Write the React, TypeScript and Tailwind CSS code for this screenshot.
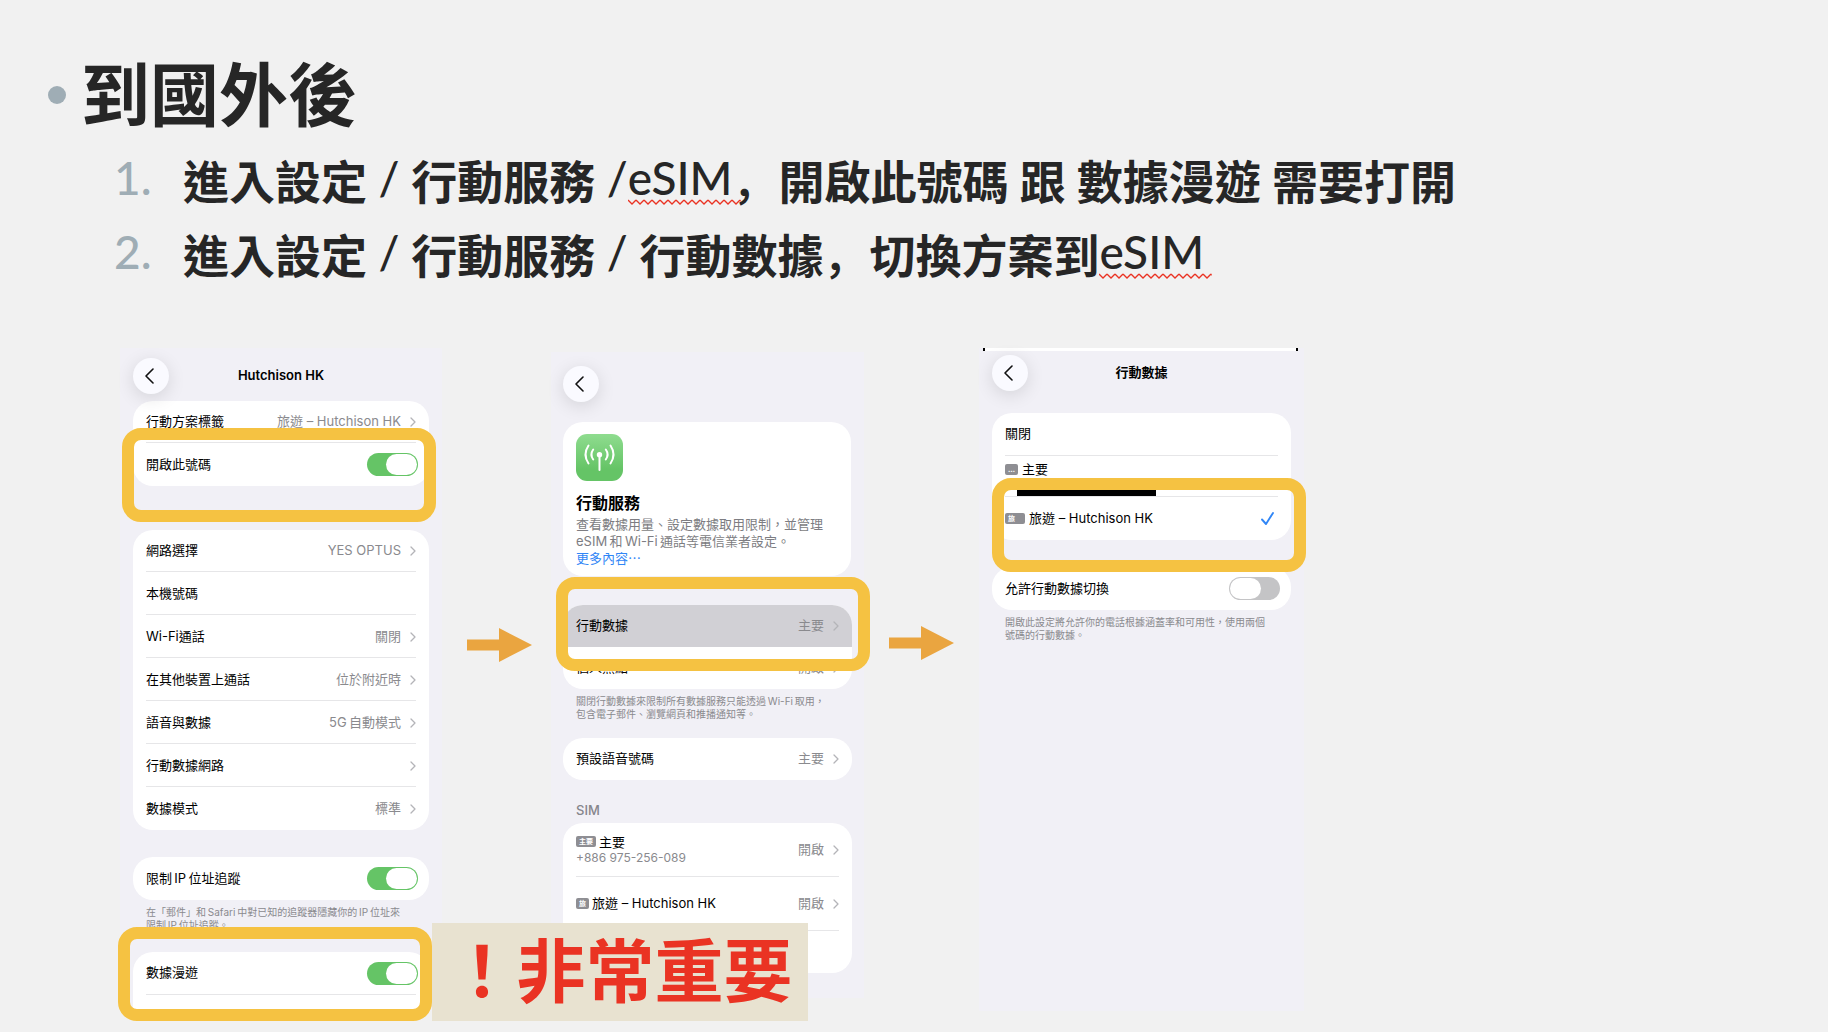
import { useId } from "react";
import type { ReactNode } from "react";

const slideFont = "font-['Lato','Noto_Sans_CJK_TC',sans-serif]";
const phoneFont = "font-['Inter','Noto_Sans_CJK_TC',sans-serif]";

function BackButton() {
  return (
    <button
      type="button"
      aria-label="返回"
      className="flex h-9 w-9 shrink-0 items-center justify-center rounded-full bg-[#fafaff] shadow-[0_4px_18px_rgba(0,0,0,0.12)]"
    >
      <svg viewBox="0 0 9 16" className="mr-1 h-4 w-[9px]" fill="none" stroke="#111" strokeWidth="1.6" strokeLinecap="round" strokeLinejoin="round">
        <path d="M8 1 1 8l7 7" />
      </svg>
    </button>
  );
}

function Chevron() {
  return (
    <svg viewBox="0 0 6 10" className="h-[10px] w-[6px] shrink-0" fill="none" stroke="#b4b4b8" strokeWidth="1.3" strokeLinecap="round" strokeLinejoin="round">
      <path d="m1 1 4 4-4 4" />
    </svg>
  );
}

function Card({ children }: { children: ReactNode }) {
  return <div className="overflow-hidden rounded-[20px] bg-white">{children}</div>;
}

interface LinkRowProps {
  label: string;
  value?: string;
  divider?: boolean;
  active?: boolean;
}

function LinkRow({ label, value, divider, active }: LinkRowProps) {
  return (
    <button type="button" className={`block w-full px-[13px] text-left ${active ? "bg-[#d1d0d5]" : ""}`}>
      <span className={`flex h-[42px] items-center justify-between ${divider ? "border-b border-[#e6e6e8]" : ""}`}>
        <span>{label}</span>
        <span className="flex items-center gap-[9px] text-[#8a8a8e]">
          {value}
          <Chevron />
        </span>
      </span>
    </button>
  );
}

function ToggleRow({ label, on, divider }: { label: string; on?: boolean; divider?: boolean }) {
  const id = useId();
  return (
    <div className="px-[13px]">
      <div className={`flex h-[43px] items-center justify-between ${divider ? "border-b border-[#e6e6e8]" : ""}`}>
        <label htmlFor={id}>{label}</label>
        <input
          id={id}
          type="checkbox"
          defaultChecked={on}
          className="-mr-0.5 flex h-[23px] w-[51px] appearance-none rounded-full bg-[#c4c4c6] p-px before:h-[21px] before:w-[31px] before:rounded-full before:bg-white checked:justify-end checked:bg-[#65c466]"
        />
      </div>
    </div>
  );
}

function Footnote({ children }: { children: ReactNode }) {
  return <p className="mt-1.5 px-[13px] text-[10px] leading-[13px] whitespace-nowrap text-[#8a8a8e]">{children}</p>;
}

function Badge({ children, wide }: { children: ReactNode; wide?: boolean }) {
  return (
    <span
      className={`flex h-[11px] shrink-0 items-center justify-center rounded-[2px] bg-[#8e8e93] text-[7px] leading-none font-bold text-white ${
        wide ? "w-5" : "w-[13px]"
      }`}
    >
      {children}
    </span>
  );
}

// Yellow highlight laid over a phone
function Ring({ className }: { className: string }) {
  return (
    <div
      aria-hidden="true"
      className={`pointer-events-none absolute z-10 h-[94px] w-[314px] rounded-[19px] border-[12px] border-[#f5c242] ${className}`}
    />
  );
}

function Arrow() {
  return (
    <svg viewBox="0 0 65 34" className="h-[34px] w-[65px] shrink-0" aria-hidden="true">
      <path d="M0 11.5h32V0l33 17-33 17V22.500H0z" fill="#eaa540" />
    </svg>
  );
}

// Latin runs sit a little above the baseline of the Chinese text
function Latin({ children }: { children: ReactNode }) {
  return <span className="align-[4px] leading-none font-medium">{children}</span>;
}

function Slash() {
  return <Latin> / </Latin>;
}

function Comma() {
  return (
    <span lang="zh-Hans" className="font-['Noto_Sans_CJK_SC',sans-serif] leading-none font-medium">
      ，
    </span>
  );
}

function Misspelled({ children }: { children: ReactNode }) {
  return (
    <span className="relative">
      {children}
      <svg className="absolute top-full left-0 -mt-[6px] h-[6px] w-[calc(100%+8px)]" aria-hidden="true">
        <defs>
          <pattern id="squiggle" width="8" height="6" patternUnits="userSpaceOnUse">
            <path d="M0 1l4 4 4-4" fill="none" stroke="#ea3323" strokeWidth="1.3" />
          </pattern>
        </defs>
        <rect width="100%" height="6" fill="url(#squiggle)" />
      </svg>
    </span>
  );
}

function LinePhone() {
  return (
    <section className="relative w-[322px] shrink-0 bg-[#f1f0f6] px-[13px] pt-[10px]">
      <header className="grid grid-cols-[36px_1fr_36px] items-center">
        <BackButton />
        <h2 className="text-center font-semibold">Hutchison HK</h2>
      </header>
      <div className="mt-[7px]">
        <Card>
          <LinkRow label="行動方案標籤" value="旅遊 – Hutchison HK" divider />
          <ToggleRow label="開啟此號碼" on />
        </Card>
      </div>
      <div className="mt-11">
        <Card>
          <div className="space-y-px">
            <LinkRow label="網路選擇" value="YES OPTUS" divider />
            <div className="px-[13px]">
              <div className="flex h-[42px] items-center border-b border-[#e6e6e8]">本機號碼</div>
            </div>
            <LinkRow label="Wi-Fi通話" value="關閉" divider />
            <LinkRow label="在其他裝置上通話" value="位於附近時" divider />
            <LinkRow label="語音與數據" value={"5G\u2009自動模式"} divider />
            <LinkRow label="行動數據網路" divider />
            <LinkRow label="數據模式" value="標準" />
          </div>
        </Card>
      </div>
      <div className="mt-[27px]">
        <Card>
          <ToggleRow label={"限制\u2009IP\u2009位址追蹤"} on />
        </Card>
        <Footnote>
          在「郵件」和{"\u2009"}Safari{"\u2009"}中對已知的追蹤器隱藏你的{"\u2009"}IP{"\u2009"}位址來
          <br />
          限制{"\u2009"}IP{"\u2009"}位址追蹤。
        </Footnote>
      </div>
      <div className="mt-5 h-[59px] overflow-hidden rounded-t-[20px] bg-white">
        <ToggleRow label="數據漫遊" on divider />
      </div>
      <Ring className="top-20 left-[2px]" />
      <Ring className="-bottom-[10px] -left-0.5" />
      <p className={`absolute -bottom-[10px] left-[312px] z-20 flex h-[98px] w-[376px] items-center justify-center bg-[#e8e2d0] pb-1 text-[69px] leading-none font-bold text-[#ea3323] ${slideFont}`}>
        ！非常重要
      </p>
    </section>
  );
}

function ServicePhone() {
  return (
    <section className="relative mt-1 w-[313px] shrink-0 self-start bg-[#f1f0f6] px-3 pt-[14px] pb-[25px]">
      <BackButton />
      <div className="mt-5 mr-px rounded-[20px] bg-white px-[13px] pt-3 pb-[9px]">
        <svg viewBox="0 0 47 47" className="h-[47px] w-[47px]" aria-hidden="true">
          <defs>
            <linearGradient id="cellular" x1="0" y1="0" x2="0" y2="1">
              <stop offset="0" stopColor="#8fdc8f" />
              <stop offset="0.75" stopColor="#65c466" />
            </linearGradient>
          </defs>
          <rect width="47" height="47" rx="11" fill="url(#cellular)" />
          <g fill="none" stroke="#fff" strokeWidth="2" strokeLinecap="round">
            <path d="M23.500 21v15" />
            <path d="M12.500 11.500q-6 9 0 18M34.500 11.500q6 9 0 18" />
            <path d="M17.200 15.500q-3.600 5 0 10M29.800 15.500q3.600 5 0 10" />
          </g>
          <circle cx="23.500" cy="20.700" r="2.700" fill="#fff" />
        </svg>
        <h2 className="mt-3 text-base leading-5 font-bold">行動服務</h2>
        <p className="mt-[3px] leading-[17px] whitespace-nowrap text-[#7d7d82]">
          查看數據用量、設定數據取用限制，並管理
          <br />
          eSIM{"\u2009"}和{"\u2009"}Wi-Fi{"\u2009"}通話等電信業者設定。
        </p>
        <a href="#more" className="block leading-[17px] text-[#3186f6]">
          更多內容⋯
        </a>
      </div>
      <div className="mt-[29px]">
        <Card>
          <LinkRow label="行動數據" value="主要" active />
          <LinkRow label="個人熱點" value="開啟" />
        </Card>
        <Footnote>
          關閉行動數據來限制所有數據服務只能透過{"\u2009"}Wi-Fi{"\u2009"}取用，
          <br />
          包含電子郵件、瀏覽網頁和推播通知等。
        </Footnote>
      </div>
      <div className="mt-[17px]">
        <Card>
          <LinkRow label="預設語音號碼" value="主要" />
        </Card>
      </div>
      <h3 className="mt-5 mb-[3px] px-[13px] leading-5 font-medium text-[#85858b]">SIM</h3>
      <Card>
        <button type="button" className="block w-full px-[13px] text-left">
          <span className="flex h-[54px] items-center justify-between border-b border-[#e6e6e8]">
            <span>
              <span className="flex items-center gap-[3px] leading-4">
                <Badge wide>主要</Badge>
                主要
              </span>
              <span className="block text-xs leading-4 text-[#8a8a8e]">+886 975-256-089</span>
            </span>
            <span className="flex items-center gap-[9px] text-[#8a8a8e]">
              開啟
              <Chevron />
            </span>
          </span>
        </button>
        <button type="button" className="block w-full px-[13px] text-left">
          <span className="flex h-[54px] items-center justify-between border-b border-[#e6e6e8]">
            <span className="flex items-center gap-[3px]">
              <Badge>旅</Badge>
              旅遊 – Hutchison HK
            </span>
            <span className="flex items-center gap-[9px] text-[#8a8a8e]">
              開啟
              <Chevron />
            </span>
          </span>
        </button>
        <div className="h-[42px]" />
      </Card>
      <Ring className="top-[225px] left-[5px]" />
    </section>
  );
}

function DataPhone() {
  return (
    <section className="relative w-[325px] shrink-0 bg-[#f1f0f6] px-[13px]">
      <div className="-ml-[9px] -mr-[7px] h-[3px] border-x-2 border-black bg-white" />
      <header className="mt-1 grid grid-cols-[36px_1fr_36px] items-center">
        <BackButton />
        <h2 className="text-center font-semibold">行動數據</h2>
      </header>
      <div className="mt-[22px]">
        <Card>
          <div className="px-[13px]">
            <div className="flex h-[43px] items-center border-b border-[#e6e6e8]">關閉</div>
            <div className="h-[41px] border-b border-[#e6e6e8] pt-[5px]">
              <div className="flex items-center gap-1 leading-4">
                <Badge>…</Badge>
                主要
              </div>
              <div className="mt-[10px] ml-3 h-[9px] w-[139px] bg-black" />
            </div>
            <div className="flex h-[43px] items-center gap-1">
              <Badge wide>
                <span className="mr-[7px]">旅</span>
              </Badge>
              旅遊 – Hutchison HK
              <svg viewBox="0 0 13 13" className="mr-1 ml-auto h-[13px] w-[13px]" fill="none" stroke="#3186f6" strokeWidth="1.9" strokeLinecap="round" strokeLinejoin="round" aria-hidden="true">
                <path d="m1 7.500 4 4.500L12 1" />
              </svg>
            </div>
          </div>
        </Card>
      </div>
      <div className="mt-[27px]">
        <Card>
          <ToggleRow label="允許行動數據切換" />
        </Card>
        <Footnote>
          開啟此設定將允許你的電話根據涵蓋率和可用性，使用兩個
          <br />
          號碼的行動數據。
        </Footnote>
      </div>
      <Ring className="top-[130px] left-[13px]" />
    </section>
  );
}

export default function App() {
  return (
    <main lang="zh-Hant" className={`min-h-screen w-full overflow-x-hidden bg-[#f1f1f1] text-[#262626] ${slideFont}`}>
      <div className="flex items-center gap-[15px] pt-[45px] pl-12">
        <span aria-hidden="true" className="h-[18px] w-[18px] rounded-full bg-[#9fadb5]" />
        <h1 className="text-[69px] leading-[100px] font-bold">到國外後</h1>
      </div>

      <ol className="pl-[114px] text-[46px] leading-[74px] font-bold whitespace-nowrap">
        <li className="flex h-[74px]">
          <span className="w-[69px] text-[#9fadb5]">
            <Latin>1.</Latin>
          </span>
          <span>
            進入設定
            <Slash />
            行動服務
            <Latin>
              {" /"}
              <Misspelled>eSIM</Misspelled>
            </Latin>
            <Comma />
            開啟此號碼 跟 數據漫遊 需要打開
          </span>
        </li>
        <li className="flex h-[74px]">
          <span className="w-[69px] text-[#9fadb5]">
            <Latin>2.</Latin>
          </span>
          <span>
            進入設定
            <Slash />
            行動服務
            <Slash />
            行動數據
            <Comma />
            切換方案到
            <Latin>
              <Misspelled>eSIM</Misspelled>
            </Latin>
          </span>
        </li>
      </ol>

      <div className={`flex pt-[55px] pl-[120px] text-[13px] text-black ${phoneFont}`}>
        <LinePhone />
        <div className="mt-[280px] pr-[19px] pl-[25px]">
          <Arrow />
        </div>
        <ServicePhone />
        <div className="mt-[278px] px-[25px]">
          <Arrow />
        </div>
        <DataPhone />
      </div>
    </main>
  );
}
